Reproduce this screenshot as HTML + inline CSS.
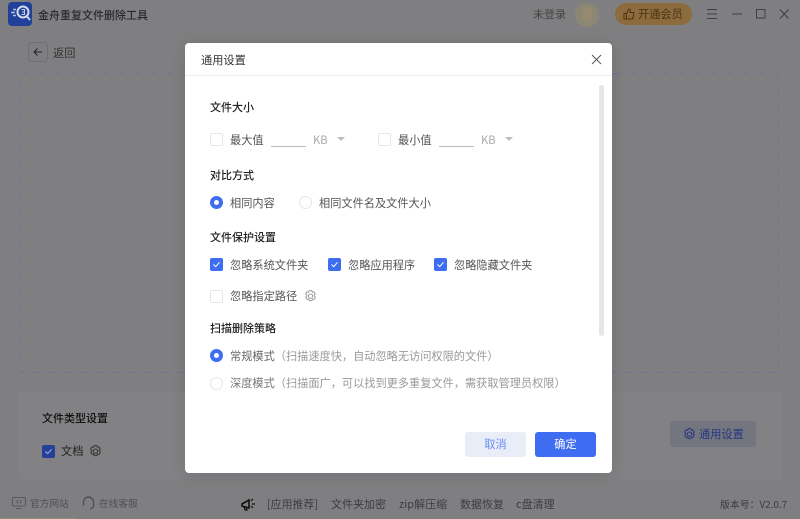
<!DOCTYPE html>
<html><head><meta charset="utf-8"><style>
html,body{margin:0;padding:0;width:800px;height:519px;overflow:hidden;background:#7f7f81}
body{position:relative;font-family:"Noto Sans CJK SC","Liberation Sans",sans-serif;font-size:11.2px}
.t{position:absolute;white-space:nowrap;line-height:16px;height:16px}
.h{color:#222;font-weight:500;font-size:11px}
.g{color:#555}
.b{position:absolute;width:11px;height:11px;border:1px solid #e4e6ec;border-radius:2px;background:#fff}
.c{position:absolute;width:13px;height:13px;border-radius:2px;background:#3f6df2}
.c svg{position:absolute;left:2px;top:2px}
.r{position:absolute;width:11px;height:11px;border:1px solid #e4e6ec;border-radius:50%;background:#fff}
.ro{position:absolute;width:5px;height:5px;border:4px solid #3f6df2;border-radius:50%;background:#fff}
svg{position:absolute;overflow:visible}
</style></head><body>
<svg style="left:0;top:0" width="800" height="519"><rect x="19.500" y="73.500" width="759" height="299" rx="2" fill="none" stroke="#6b7694" stroke-width="1" stroke-dasharray="7 9"/></svg>
<div style="position:absolute;left:19px;top:392px;width:763px;height:87px;background:#828284"></div>
<div style="position:absolute;left:0;top:518px;width:75px;height:1px;background:#8b8e74"></div>

<svg style="left:8px;top:2px" width="24" height="24" viewBox="0 0 24 24"><rect width="24" height="24" rx="4" fill="#22409a"/><circle cx="15" cy="10" r="5.500" fill="#22409a" stroke="#d3dbef" stroke-width="2"/><path d="M13.500 7.500h3v5h-3M14 10h2" stroke="#c9d3ea" stroke-width="1" fill="none"/><path d="M19 14.500l3 3.500" stroke="#c9d3ea" stroke-width="2"/><path d="M5 7.500h3M3 10.500h4M5 13.500h3" stroke="#aebde2" stroke-width="1.600"/></svg>
<div class="t" style="left:38px;top:7px;color:#2a2a2c;font-size:11px;font-weight:500">金舟重复文件删除工具</div>
<div class="t" style="left:533px;top:6px;color:#444;font-size:11px">未登录</div>
<div style="position:absolute;left:575px;top:3px;width:24px;height:24px;border-radius:50%;background:#8c8674"></div>
<div style="position:absolute;left:582px;top:7px;width:10px;height:15px;border-radius:5px;background:#95896f"></div>
<div style="position:absolute;left:615px;top:3px;width:77px;height:22px;border-radius:11px;background:#8c6c3f"></div>
<svg style="left:623px;top:8px" width="12" height="12" viewBox="0 0 12 12"><path d="M1 5.500h2.500V11H1zM3.500 5.500L6 1c1.200 0 1.500 1 1.200 2L6.800 4.500H11L9.700 11H3.500" fill="none" stroke="#4a3413" stroke-width="1"/></svg>
<div class="t" style="left:638px;top:6px;color:#4a3413;font-size:11.200px">开通会员</div>
<svg style="left:707px;top:8px" width="80" height="13" viewBox="0 0 80 13" fill="none" stroke="#3f3f42" stroke-width="1"><path d="M0 1.500h10M0 6h10M0 10.500h10"/><path d="M25 6h10"/><path d="M49.500 1.500h8.500v8.500h-8.500z"/><path d="M73 1.500l8.500 9M81.500 1.500l-8.500 9"/></svg>

<div style="position:absolute;left:28px;top:42px;width:20px;height:20px;box-sizing:border-box;border:1px solid #707074;border-radius:4px"></div>
<svg style="left:33px;top:47px" width="10" height="10" viewBox="0 0 10 10" fill="none" stroke="#222" stroke-width="1"><path d="M9 5H1M4.500 1.500L1 5l3.500 3.500"/></svg>
<div class="t" style="left:53px;top:45px;color:#333;font-size:11.200px">返回</div>

<div class="t" style="left:42px;top:410px;color:#111;font-weight:500;font-size:11px">文件类型设置</div>
<div class="c" style="left:42px;top:445px;background:#26409a"><svg width="9" height="9" viewBox="0 0 9 9"><path d="M1.500 4.500L3.700 6.700 7.500 2.300" fill="none" stroke="#aab5d4" stroke-width="1"/></svg></div>
<div class="t" style="left:61px;top:443px;color:#222">文档</div>
<svg style="left:89px;top:445px" width="13" height="13" viewBox="0 0 12 12" fill="none" stroke="#333" stroke-width=".9"><path d="M4.800.6h2.400l.5 1.500 1.500-.4 1.200 2-1.100 1.200.1.600 1.100 1.200-1.200 2-1.500-.4-.5 1.500H4.800l-.5-1.500-1.500.4-1.200-2 1.100-1.200-.1-.600L1.500 3.700l1.200-2 1.500.4z" stroke-linejoin="round"/><circle cx="6" cy="5.700" r="2"/></svg>

<div style="position:absolute;left:670px;top:421px;width:86px;height:26px;border-radius:3px;background:#74767f"></div>
<svg style="left:683px;top:428px" width="13" height="13" viewBox="0 0 12 12" fill="none" stroke="#24367f" stroke-width=".9"><path d="M4.800.6h2.400l.5 1.500 1.500-.4 1.200 2-1.100 1.200.1.600 1.100 1.200-1.200 2-1.500-.4-.5 1.500H4.800l-.5-1.500-1.500.4-1.200-2 1.100-1.200-.1-.600L1.500 3.700l1.200-2 1.500.4z" stroke-linejoin="round"/><circle cx="6" cy="5.700" r="2"/></svg>
<div class="t" style="left:699px;top:426px;color:#24367f;font-size:11.200px">通用设置</div>

<svg style="left:12px;top:497px" width="14" height="12" viewBox="0 0 14 12" fill="none" stroke="#58585a" stroke-width="1"><rect x=".500" y=".500" width="13" height="8.500" rx="1"/><path d="M4 11.500h6M6 3L4.700 4.700 6 6.300M8 3l1.300 1.700L8 6.300"/></svg>
<div class="t" style="left:30px;top:495px;color:#505052;font-size:9.700px">官方网站</div>
<svg style="left:82px;top:496px" width="13" height="14" viewBox="0 0 13 14" fill="none" stroke="#505052" stroke-width="1.400"><path d="M1.500 8V6a5 5 0 0 1 10 0v2M1.500 6.500v3M11.500 6.500v3M11.500 9.500c0 2-1.500 3-3.500 3"/></svg>
<div class="t" style="left:99px;top:495px;color:#505052;font-size:9.700px">在线客服</div>
<svg style="left:241px;top:497px" width="16" height="14" viewBox="0 0 16 14"><path d="M1 7l7-4v8L1 9z" fill="none" stroke="#111" stroke-width="1.600"/><path d="M3 10l1 3h2l-1-3M10 4l2-2M11 7h3M10 9l2 2" stroke="#111" stroke-width="1.200" fill="none"/></svg>
<div class="t" style="left:267px;top:496px;color:#3c3c3e;font-size:10.900px">[应用推荐]</div>
<div class="t" style="left:331px;top:496px;color:#3c3c3e;font-size:11px">文件夹加密</div>
<div class="t" style="left:399px;top:496px;color:#3c3c3e;font-size:11px">zip解压缩</div>
<div class="t" style="left:460px;top:496px;color:#3c3c3e;font-size:11px">数据恢复</div>
<div class="t" style="left:516px;top:496px;color:#3c3c3e;font-size:11px">c盘清理</div>
<div class="t" style="left:720px;top:496px;color:#3c3c3e;font-size:9.900px">版本号：V2.0.7</div>

<div style="position:absolute;left:185px;top:43px;width:427px;height:430px;background:#fff;border-radius:4px;box-shadow:0 2px 16px rgba(0,0,0,.12)"></div>
<div style="position:absolute;left:185px;top:75px;width:427px;height:1px;background:#eee"></div>
<div class="t" style="left:201px;top:52px;color:#333;font-size:11.200px">通用设置</div>
<svg style="left:591px;top:54px" width="11" height="11" viewBox="0 0 11 11"><path d="M1 1l9 9M10 1l-9 9" stroke="#555" stroke-width="1" fill="none"/></svg>
<div style="position:absolute;left:599px;top:85px;width:5px;height:251px;background:#e6e6e6;border-radius:3px"></div>

<div class="t h" style="left:210px;top:99px">文件大小</div>
<div class="b" style="left:210px;top:133px"></div>
<div class="t g" style="left:230px;top:132px">最大值</div>
<div style="position:absolute;left:271px;top:146px;width:35px;height:1px;background:#bbb"></div>
<div class="t" style="left:313px;top:132px;color:#aaa;font-size:11.200px">KB</div>
<div style="position:absolute;left:337px;top:137px;border:4px solid transparent;border-top:4px solid #bbb"></div>
<div class="b" style="left:378px;top:133px"></div>
<div class="t g" style="left:398px;top:132px">最小值</div>
<div style="position:absolute;left:439px;top:146px;width:35px;height:1px;background:#bbb"></div>
<div class="t" style="left:481px;top:132px;color:#aaa;font-size:11.200px">KB</div>
<div style="position:absolute;left:505px;top:137px;border:4px solid transparent;border-top:4px solid #bbb"></div>

<div class="t h" style="left:210px;top:167px">对比方式</div>
<div class="ro" style="left:210px;top:196px"></div>
<div class="t g" style="left:230px;top:195px">相同内容</div>
<div class="r" style="left:299px;top:196px"></div>
<div class="t g" style="left:319px;top:195px">相同文件名及文件大小</div>

<div class="t h" style="left:210px;top:229px">文件保护设置</div>
<div class="c" style="left:210px;top:258px"><svg width="9" height="9" viewBox="0 0 9 9"><path d="M1.500 4.500L3.700 6.700 7.500 2.300" fill="none" stroke="#fff" stroke-width="1"/></svg></div>
<div class="t g" style="left:230px;top:257px">忽略系统文件夹</div>
<div class="c" style="left:328px;top:258px"><svg width="9" height="9" viewBox="0 0 9 9"><path d="M1.500 4.500L3.700 6.700 7.500 2.300" fill="none" stroke="#fff" stroke-width="1"/></svg></div>
<div class="t g" style="left:348px;top:257px">忽略应用程序</div>
<div class="c" style="left:434px;top:258px"><svg width="9" height="9" viewBox="0 0 9 9"><path d="M1.500 4.500L3.700 6.700 7.500 2.300" fill="none" stroke="#fff" stroke-width="1"/></svg></div>
<div class="t g" style="left:454px;top:257px">忽略隐藏文件夹</div>
<div class="b" style="left:210px;top:290px"></div>
<div class="t g" style="left:230px;top:288px">忽略指定路径</div>
<svg style="left:304px;top:290px" width="13" height="13" viewBox="0 0 12 12" fill="none" stroke="#999" stroke-width=".9"><path d="M4.800.6h2.400l.5 1.500 1.500-.4 1.200 2-1.100 1.200.1.600 1.100 1.200-1.200 2-1.500-.4-.5 1.500H4.800l-.5-1.500-1.500.4-1.200-2 1.100-1.200-.1-.600L1.500 3.700l1.200-2 1.500.4z" stroke-linejoin="round"/><circle cx="6" cy="5.700" r="2"/></svg>

<div class="t h" style="left:210px;top:320px">扫描删除策略</div>
<div class="ro" style="left:210px;top:349px"></div>
<div class="t" style="left:230px;top:348px;color:#666">常规模式<span style="color:#999">（扫描速度快，自动忽略无访问权限的文件）</span></div>
<div class="r" style="left:210px;top:377px"></div>
<div class="t" style="left:230px;top:375px;color:#777">深度模式<span style="color:#999">（扫描面广，可以找到更多重复文件，需获取管理员权限）</span></div>

<div style="position:absolute;left:465px;top:432px;width:61px;height:25px;background:#e9edf7;border-radius:3px;text-align:center;line-height:25px;color:#6a8df2;font-size:11.200px">取消</div>
<div style="position:absolute;left:535px;top:432px;width:61px;height:25px;background:#3f6df2;border-radius:3px;text-align:center;line-height:25px;color:#fff;font-size:11.200px">确定</div>
</body></html>
